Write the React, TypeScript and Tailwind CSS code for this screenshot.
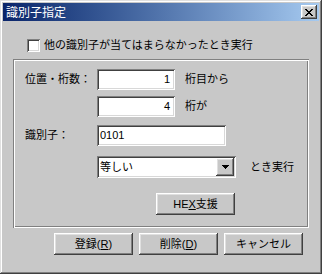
import React from "react";

const raised =
  "bg-[#c8c8c8] shadow-[inset_-1px_-1px_#404040,inset_1px_1px_#ffffff,inset_-2px_-2px_#808080,inset_2px_2px_#e0e0e0]";
const sunken =
  "bg-white shadow-[inset_1px_1px_#808080,inset_-1px_-1px_#ffffff,inset_2px_2px_#404040,inset_-2px_-2px_#d8d8d8]";
const etched =
  "shadow-[inset_1px_1px_#808080,inset_-1px_-1px_#ffffff,inset_2px_2px_#ffffff,inset_-2px_-2px_#808080]";

const Button: React.FC<{ children: React.ReactNode; className?: string }> = ({ children, className }) => (
  <button className={`${raised} w-[79px] h-[22px] flex items-center justify-center text-[11px] leading-none ${className ?? ""}`}>
    {children}
  </button>
);

export default function App() {
  return (
    <div className="w-[322px] h-[274px] bg-[#c8c8c8] p-[3px] shadow-[inset_-1px_-1px_#404040,inset_1px_1px_#e0e0e0,inset_-2px_-2px_#808080,inset_2px_2px_#ffffff] font-['Liberation_Sans','Noto_Sans_CJK_JP',sans-serif] text-[11px] leading-none text-black select-none">
      {/* title bar */}
      <div className="h-[18px] flex items-center justify-between bg-gradient-to-r from-[#0a246a] to-[#a6caf0] pl-[3px] pr-[2px]">
        <span className="text-white text-[12px] font-['Noto_Sans_CJK_JP',sans-serif]">識別子指定</span>
        <div className={`${raised} w-[16px] h-[14px] flex items-center justify-center`}>
          <svg width="8" height="7" viewBox="0 0 8 7" shapeRendering="crispEdges">
            <path
              fill="#000"
              d="M0 0h2v1h1v1h2v-1h1v-1h2v1h-1v1h-1v1h-1v1h1v1h1v1h1v1h-2v-1h-1v-1h-2v1h-1v1h-2v-1h1v-1h1v-1h1v-1h-1v-1h-1v-1h-1z"
            />
          </svg>
        </div>
      </div>

      {/* checkbox */}
      <div className="mt-[18px] ml-[24px] flex items-center gap-[4px] h-[13px]">
        <div className={`${sunken} w-[13px] h-[13px]`} />
        <span>他の識別子が当てはまらなかったとき実行</span>
      </div>

      {/* group box */}
      <div className={`${etched} mt-[7px] ml-[10px] w-[296px] h-[169px] pt-[10px] pl-[12px]`}>
        <div className="flex items-center h-[21px]">
          <span className="w-[72px]">位置・桁数：</span>
          <div className={`${sunken} w-[78px] h-[21px] flex items-center justify-end pr-[5px]`}>1</div>
          <span className="ml-[10px]">桁目から</span>
        </div>
        <div className="flex items-center h-[21px] mt-[6px]">
          <div className={`${sunken} ml-[72px] w-[78px] h-[21px] flex items-center justify-end pr-[5px]`}>4</div>
          <span className="ml-[10px]">桁が</span>
        </div>
        <div className="flex items-center h-[21px] mt-[8px]">
          <span className="w-[72px]">識別子：</span>
          <div className={`${sunken} w-[129px] h-[21px] flex items-center pl-[3px]`}>0101</div>
        </div>
        <div className="flex items-center h-[22px] mt-[10px]">
          <div className={`${sunken} ml-[72px] w-[139px] h-[22px] flex items-center justify-between pl-[3px] pr-[2px]`}>
            <span>等しい</span>
            <div className={`${raised} w-[18px] h-[18px] flex items-center justify-center`}>
              <svg width="7" height="4" viewBox="0 0 7 4" shapeRendering="crispEdges">
                <path fill="#000" d="M0 0h7v1h-1v1h-1v1h-1v1h-1v-1h-1v-1h-1v-1h-1z" />
              </svg>
            </div>
          </div>
          <span className="ml-[14px]">とき実行</span>
        </div>
        <div className="flex mt-[15px]">
          <Button className="ml-[131px]">
            HE<span className="underline">X</span>支援
          </Button>
        </div>
      </div>

      {/* buttons */}
      <div className="flex gap-[6px] mt-[5px] ml-[51px]">
        <Button>
          登録(<span className="underline">R</span>)
        </Button>
        <Button>
          削除(<span className="underline">D</span>)
        </Button>
        <Button>キャンセル</Button>
      </div>
    </div>
  );
}
